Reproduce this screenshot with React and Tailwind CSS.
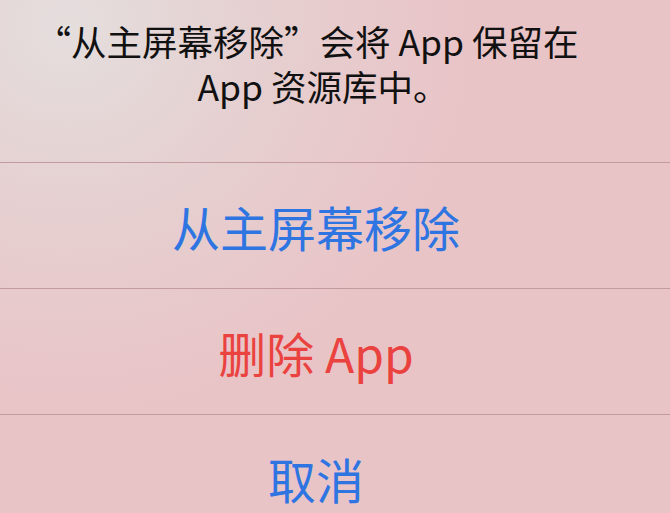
export default function App() {
  const cjk = { fontFamily: '"Noto Sans CJK SC", "Noto Sans", sans-serif' };
  return (
    <div
      className="w-[670px] h-[513px] overflow-hidden flex flex-col bg-[radial-gradient(ellipse_60%_75%_at_10%_5%,#e4dedd_0%,#e6cfd0_50%,#e9c4c7_100%)]"
      style={cjk}
    >
      <div className="h-[163px] shrink-0 flex flex-col items-center pt-[18px] pr-[38px] text-[35.5px] leading-[45px] text-[#111111] border-b border-[#c39a9e]">
        <div className="pr-[18px]">“从主屏幕移除”会将 App 保留在</div>
        <div className="pl-[14px]">App 资源库中。</div>
      </div>
      <div className="h-[126px] shrink-0 flex items-center justify-center pr-[38px] text-[48px] text-[#2f75e2] border-b border-[#c39a9e]">
        从主屏幕移除
      </div>
      <div className="h-[126px] shrink-0 flex items-center justify-center pr-[38px] text-[48px] text-[#ea423f] border-b border-[#c39a9e]">
        删除 App
      </div>
      <div className="h-[126px] shrink-0 flex items-center justify-center pr-[38px] text-[48px] text-[#2f75e2]">
        取消
      </div>
    </div>
  );
}
